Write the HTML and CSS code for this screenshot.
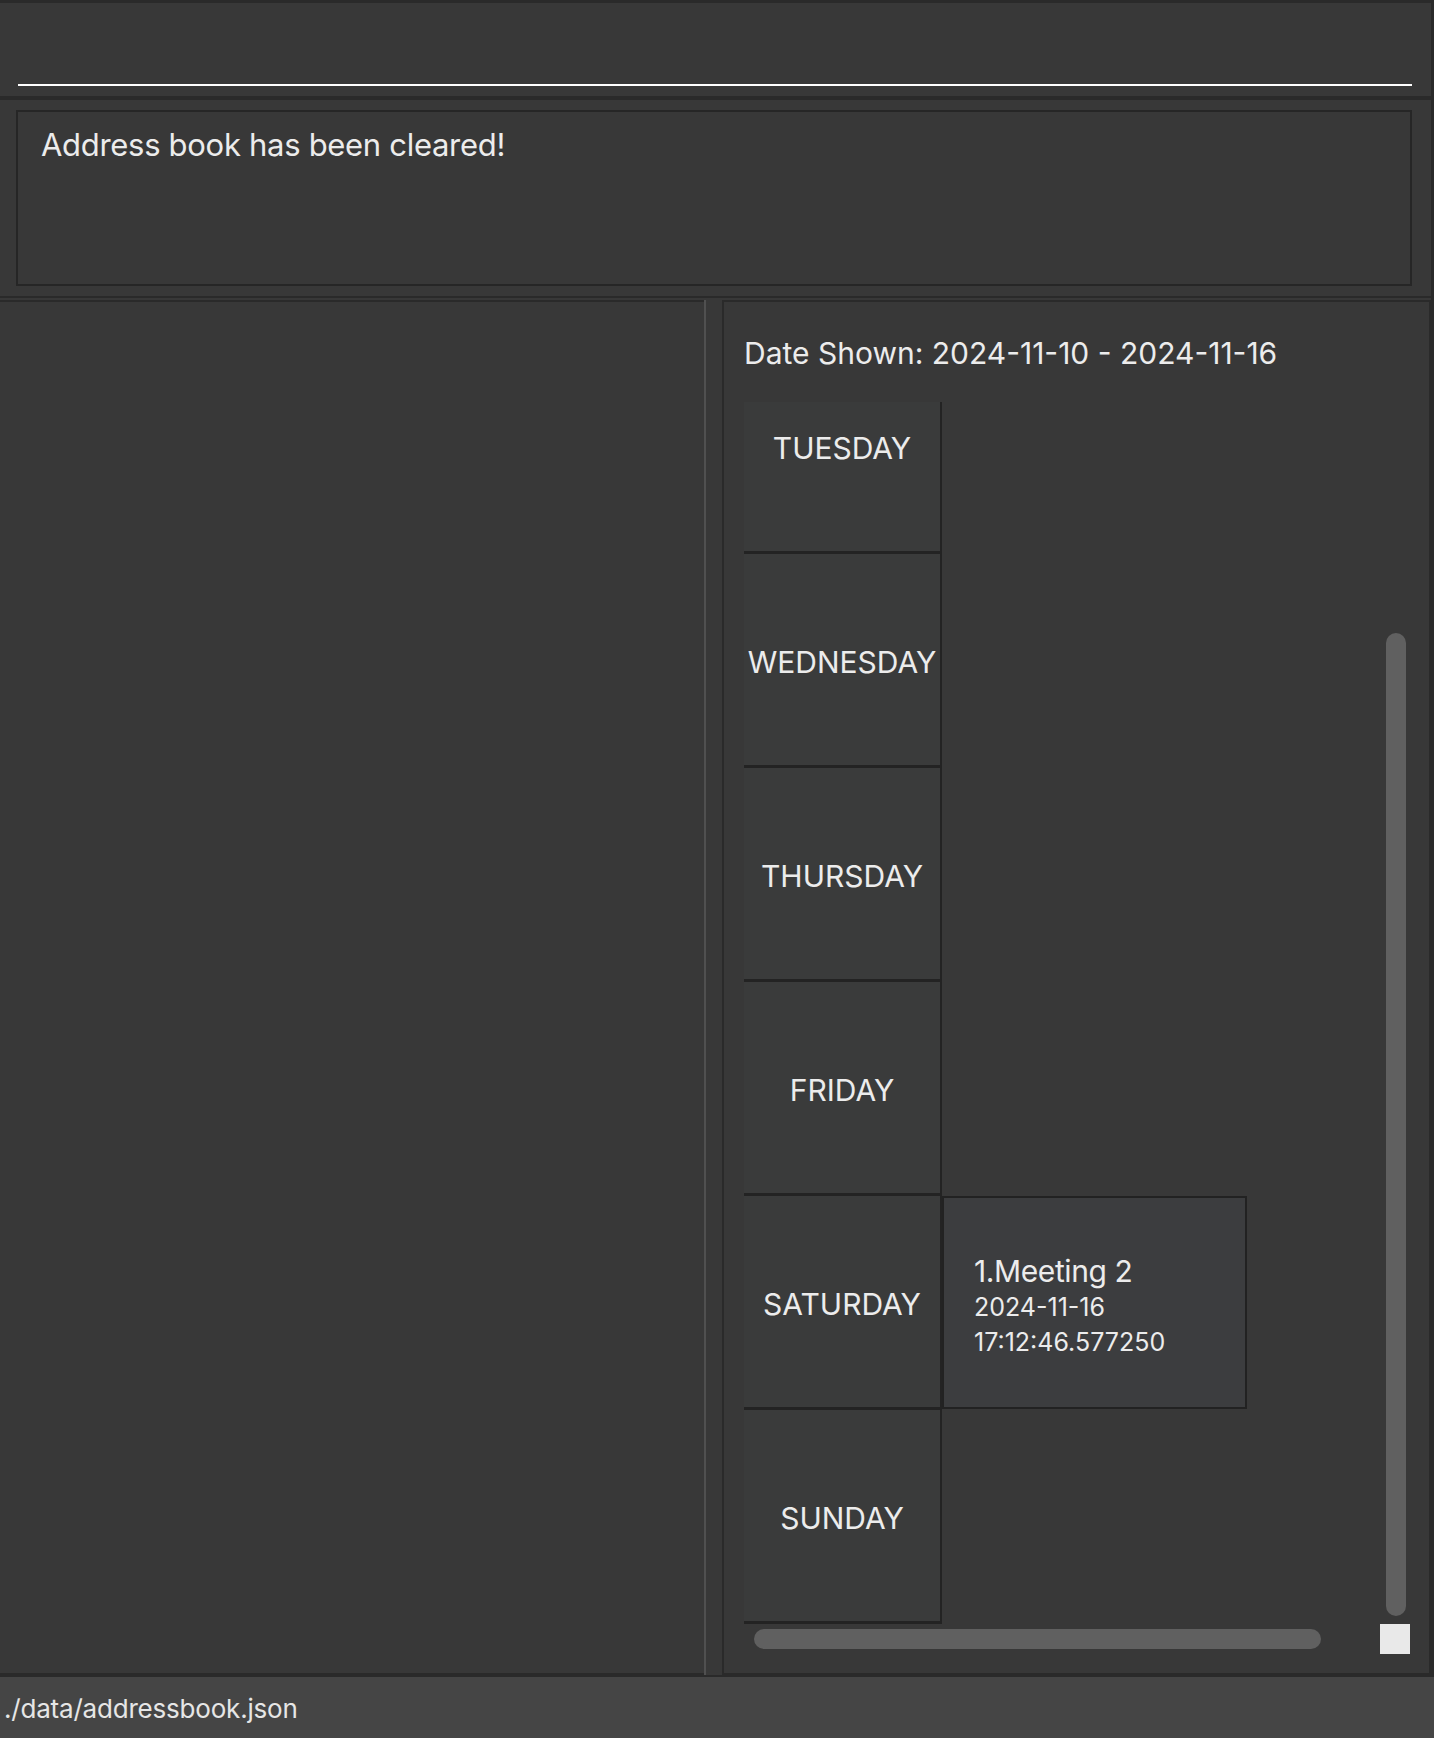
FILE: index.html
```html
<!DOCTYPE html>
<html lang="en">
<head>
<meta charset="utf-8">
<title>Address Book</title>
<link rel="stylesheet" href="styles.css">
</head>
<body>
<div class="app">
  <div class="main-area">
    <div class="command-box">
      <div class="command-input"></div>
    </div>
    <div class="result-pane">
      <div class="result-box">Address book has been cleared!</div>
    </div>
    <div class="panels">
      <div class="list-panel"></div>
      <div class="divider"></div>
      <div class="calendar-panel">
        <div class="date-label">Date Shown: 2024-11-10 - 2024-11-16</div>
        <div class="scroll-pane">
          <div class="viewport">
            <div class="week">
              <div class="day-row"><div class="day-cell">TUESDAY</div></div>
              <div class="day-row"><div class="day-cell">WEDNESDAY</div></div>
              <div class="day-row"><div class="day-cell">THURSDAY</div></div>
              <div class="day-row"><div class="day-cell">FRIDAY</div></div>
              <div class="day-row">
                <div class="day-cell">SATURDAY</div>
                <div class="event-card">
                  <div class="event-title">1.Meeting 2</div>
                  <div class="event-time">2024-11-16 17:12:46.577250</div>
                </div>
              </div>
              <div class="day-row"><div class="day-cell">SUNDAY</div></div>
            </div>
          </div>
          <div class="vbar"><div class="vthumb"></div></div>
          <div class="hbar"><div class="hthumb"></div></div>
          <div class="corner"></div>
        </div>
      </div>
    </div>
  </div>
  <div class="status-bar">./data/addressbook.json</div>
</div>
</body>
</html>
```

FILE: styles.css
```css
* {
  box-sizing: border-box;
}

html, body {
  margin: 0;
  padding: 0;
  background: #383838;
}

body {
  font-family: "Inter", "Noto Sans", "Liberation Sans", sans-serif;
  color: #ececec;
}

.app {
  width: 1434px;
  height: 1738px;
  display: flex;
  flex-direction: column;
  overflow: hidden;
}

.main-area {
  flex: 1;
  display: flex;
  flex-direction: column;
  border-right: 3px solid #2a2a2a;
  min-height: 0;
}

.command-box {
  height: 100px;
  border-top: 3px solid #2a2a2a;
  border-bottom: 4px solid #2a2a2a;
  padding: 43px 19px 0 18px;
}

.command-input {
  height: 40px;
  border-bottom: 2px solid #ffffff;
}

.result-pane {
  height: 198px;
  border-bottom: 2px solid #2a2a2a;
  padding: 10px 19px 10px 16px;
}

.result-box {
  height: 176px;
  border: 2px solid #262626;
  padding: 14px 23px 0;
  font-size: 31px;
  line-height: 38px;
  letter-spacing: -0.3px;
}

.panels {
  flex: 1;
  display: flex;
  margin-top: 2px;
  min-height: 0;
}

.list-panel {
  width: 704px;
  border-top: 2px solid #2a2a2a;
  border-bottom: 2px solid #2a2a2a;
}

.divider {
  width: 2px;
  background: #505050;
  margin-right: 16px;
}

.calendar-panel {
  flex: 1;
  border: 2px solid #2a2a2a;
  padding: 33px 19px 19px 20px;
  display: flex;
  flex-direction: column;
  min-height: 0;
}

.date-label {
  font-size: 30px;
  line-height: 36px;
  height: 36px;
  margin-bottom: 31px;
}

.scroll-pane {
  flex: 1;
  display: grid;
  grid-template-columns: 636px 30px;
  grid-template-rows: 1fr 30px;
  min-height: 0;
}

.viewport {
  overflow: hidden;
  display: flex;
  flex-direction: column;
  justify-content: flex-end;
  min-height: 0;
}

.week {
  display: flex;
  flex-direction: column;
  flex-shrink: 0;
}

.day-row {
  height: 214px;
  display: flex;
  flex-shrink: 0;
}

.day-cell {
  width: 198px;
  flex-shrink: 0;
  background: #3a3b3b;
  border-right: 2px solid #232323;
  border-bottom: 3px solid #232323;
  display: flex;
  align-items: center;
  justify-content: center;
  padding-top: 4px;
  font-size: 30px;
  line-height: 36px;
}

.event-card {
  width: 305px;
  height: 213px;
  flex-shrink: 0;
  background: #3c3d3f;
  border: 2px solid #222222;
  padding: 7px 20px 0 30px;
  display: flex;
  flex-direction: column;
  justify-content: center;
}

.event-title {
  font-size: 30px;
  line-height: 36px;
  letter-spacing: -0.4px;
}

.event-time {
  font-size: 25px;
  line-height: 35px;
  width: 230px;
  margin-top: 1px;
}

.vbar {
  padding: 231px 4px 8px 6px;
  display: flex;
}

.vthumb {
  flex: 1;
  background: #606060;
  border-radius: 10px;
}

.hbar {
  padding: 5px 0 5px 10px;
  display: flex;
}

.hthumb {
  width: 567px;
  background: #606060;
  border-radius: 10px;
}

.corner {
  background: #e9e9e9;
}

.status-bar {
  height: 63px;
  border-top: 2px solid #2a2a2a;
  background: #454545;
  padding: 2px 0 0 4px;
  font-size: 26px;
  line-height: 59px;
  letter-spacing: -0.2px;
  color: #e6e6e6;
}
```
